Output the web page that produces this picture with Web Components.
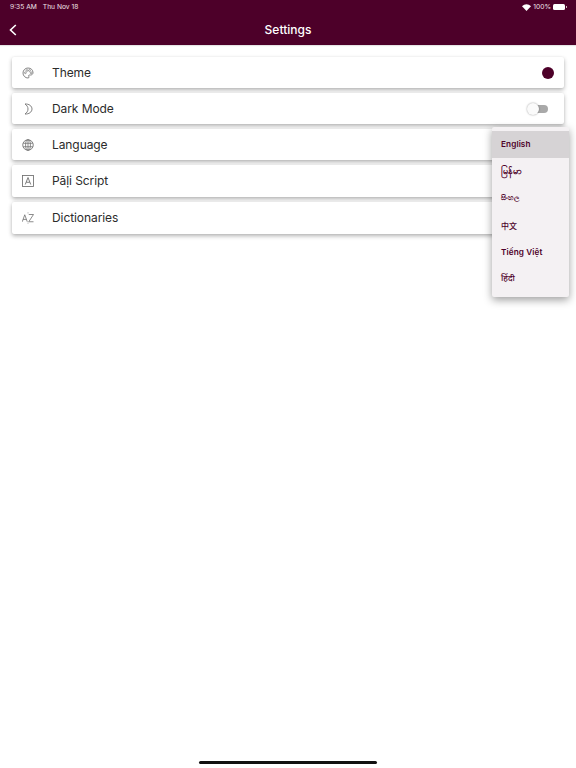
<!DOCTYPE html>
<html lang="en"><head><meta charset="utf-8"><title>Settings</title>
<style>
html,body{margin:0;padding:0;background:#fff}
body{width:576px;height:768px;overflow:hidden;font-family:Inter,"Noto Sans",sans-serif;position:relative}
</style></head><body>
<settings-app></settings-app>
<script>
const ICONS={
palette:'<path d="M12 2a10 10 0 0 0 0 20c1.300 0 2.100-.9 2.100-1.900 0-.5-.2-.9-.5-1.300-.3-.3-.5-.7-.5-1.100 0-1 .8-1.700 1.800-1.700h2.200c2.900 0 4.900-2.100 4.900-4.700C22 5.700 17.600 2 12 2z" fill="none" stroke="currentColor" stroke-width="1.700"/><circle cx="6.800" cy="11.500" r="1.800" fill="none" stroke="currentColor" stroke-width="1.300"/><circle cx="10" cy="7" r="1.800" fill="none" stroke="currentColor" stroke-width="1.300"/><circle cx="15" cy="7" r="1.800" fill="none" stroke="currentColor" stroke-width="1.300"/><circle cx="18.200" cy="11.500" r="1.800" fill="none" stroke="currentColor" stroke-width="1.300"/>',
moon:'<path d="M6 2c8-.5 14 4 14 10s-6 10.500-14 10c3.800-2.500 6-6.100 6-10S9.800 4.500 6 2z" fill="none" stroke="currentColor" stroke-width="1.700" stroke-linejoin="round"/>',
globe:'<circle cx="12" cy="12" r="10.500" fill="none" stroke="currentColor" stroke-width="1.700"/><ellipse cx="12" cy="12" rx="4.800" ry="10.500" fill="none" stroke="currentColor" stroke-width="1.600"/><path d="M2.500 8.500h19M2.500 15.500h19M12 1.500v21" fill="none" stroke="currentColor" stroke-width="1.600"/>',
script:'<rect x="1" y="1" width="22" height="22" fill="none" stroke="currentColor" stroke-width="1.700"/><path d="M6.500 19L12 5l5.500 14M8.500 14.500h7" fill="none" stroke="currentColor" stroke-width="1.800"/>',
az:'<path d="M.5 19.500L5.500 5.500l5 14M2.200 14.800h6.600M13.500 5h9.500l-9.500 14.500H23" fill="none" stroke="currentColor" stroke-width="1.600"/><path d="M12 .5v2.500M12 21v2.500" stroke="currentColor" stroke-width="1"/>'
};
class StatusBar extends HTMLElement{constructor(){super();this.attachShadow({mode:'open'}).innerHTML=`<style>
:host{display:flex;justify-content:space-between;align-items:center;height:14px;padding:0 10px;font:400 6.700px/14px Inter,sans-serif;color:#f1e4ea}
.l{display:flex;gap:6px}.r{display:flex;align-items:center;gap:2px}
.bat{display:inline-block;width:12px;height:6px;background:#fff;border-radius:1.500px;margin-right:1px;position:relative}
.bat::after{content:"";position:absolute;right:-2px;top:2px;width:1px;height:2px;background:#cbb}
</style><div class="l"><span>9:35 AM</span><span>Thu Nov 18</span></div><div class="r"><svg width="9" height="7" viewBox="0 0 18 14"><path d="M9 14L0 4.500C5-1 13-1 18 4.500z" fill="#fff"/></svg><span>100%</span><span class="bat"></span></div>`}}
class AppHeader extends HTMLElement{constructor(){super();this.attachShadow({mode:'open'}).innerHTML=`<style>
:host{display:block;background:#4d0029;height:45px;box-shadow:0 1px 1px rgba(0,0,0,.1)}
.bar{display:grid;grid-template-columns:26px 1fr 26px;align-items:center;height:31px;color:#fff}
h1{margin:0;font:500 12px/30px Inter,sans-serif;letter-spacing:0;text-align:center;color:#fff}
svg{display:block;margin-left:9px}
</style><slot name="status"></slot><div class="bar"><svg width="8" height="12" viewBox="0 0 8 12"><path d="M6.800 1L1.500 6l5.300 5" fill="none" stroke="#fff" stroke-width="1.600"/></svg><h1><slot></slot></h1><span></span></div>`}}
class SettingRow extends HTMLElement{constructor(){super();const i=this.getAttribute('icon');this.attachShadow({mode:'open'}).innerHTML=`<style>
:host{display:flex;align-items:center;height:var(--h,31px);background:#fff;border-radius:2px;padding:0 10px;box-shadow:0 2px 4px rgba(0,0,0,.3),0 0 2px rgba(0,0,0,.05);color:#2b2b2b}
svg{width:12px;height:12px;color:#6e6e6e;margin-right:18px;flex:none}
.t{flex:1;font:400 12px/1 Inter,sans-serif;letter-spacing:-.08px}
</style><svg viewBox="0 0 24 24">${ICONS[i]}</svg><span class="t"><slot></slot></span><slot name="end"></slot>`}}
class ThemeDot extends HTMLElement{constructor(){super();this.attachShadow({mode:'open'}).innerHTML=`<style>:host{display:block;width:12px;height:12px;border-radius:50%;background:#4d0029}</style>`}}
class ToggleSwitch extends HTMLElement{constructor(){super();this.attachShadow({mode:'open'}).innerHTML=`<style>
:host{display:block;position:relative;width:20px;height:8px;margin-right:6px;background:#a9a9a9;border-radius:4px}
i{position:absolute;left:-1px;top:-2px;width:12px;height:12px;border-radius:50%;background:#fafafa;box-shadow:0 0 2px rgba(0,0,0,.4)}
</style><i></i>`}}
class LangMenu extends HTMLElement{constructor(){super();this.attachShadow({mode:'open'}).innerHTML=`<style>
:host{display:block;position:absolute;left:492px;top:127px;width:77px;height:170px;box-sizing:border-box;padding:4px 0;background:#f4f1f3;border-radius:2px;box-shadow:0 3px 8px rgba(0,0,0,.38)}
</style><slot></slot>`}}
class LangItem extends HTMLElement{constructor(){super();this.attachShadow({mode:'open'}).innerHTML=`<style>
:host{display:flex;align-items:center;height:27px;padding-left:9px;font:600 8.200px/1 Inter,"Noto Sans","Noto Sans CJK SC",sans-serif;letter-spacing:.1px;color:#4d0029;white-space:nowrap}
:host([selected]){background:#d6d3d5}
</style><slot></slot>`}}
class SettingsApp extends HTMLElement{constructor(){super();this.attachShadow({mode:'open'}).innerHTML=`<style>
:host{display:block;height:768px;position:relative}
main{display:flex;flex-direction:column;gap:5px;padding:12px 12px 0}
.home{position:absolute;left:199px;bottom:4px;width:178px;height:3px;border-radius:2px;background:#111}
</style><app-header><status-bar slot="status"></status-bar>Settings</app-header>
<main>
<setting-row icon="palette">Theme<theme-dot slot="end"></theme-dot></setting-row>
<setting-row icon="moon">Dark Mode<toggle-switch slot="end"></toggle-switch></setting-row>
<setting-row icon="globe">Language</setting-row>
<setting-row icon="script" style="--h:32px">Pāḷi Script</setting-row>
<setting-row icon="az" style="--h:32px">Dictionaries</setting-row>
</main>
<lang-menu>
<lang-item selected>English</lang-item>
<lang-item style="font-size:9px;padding-bottom:2px;height:25px">မြန်မာ</lang-item>
<lang-item style="font-size:7px;font-weight:600;padding-bottom:2px;height:25px">සිංහල</lang-item>
<lang-item style="font-size:8px;font-weight:500">中文</lang-item>
<lang-item>Tiếng Việt</lang-item>
<lang-item style="font-size:8.500px;font-weight:500;padding-bottom:2px;height:25px">हिंदी</lang-item>
</lang-menu><div class="home"></div>`}}
customElements.define('status-bar',StatusBar);
customElements.define('app-header',AppHeader);
customElements.define('setting-row',SettingRow);
customElements.define('theme-dot',ThemeDot);
customElements.define('toggle-switch',ToggleSwitch);
customElements.define('lang-menu',LangMenu);
customElements.define('lang-item',LangItem);
customElements.define('settings-app',SettingsApp);
</script></body></html>
